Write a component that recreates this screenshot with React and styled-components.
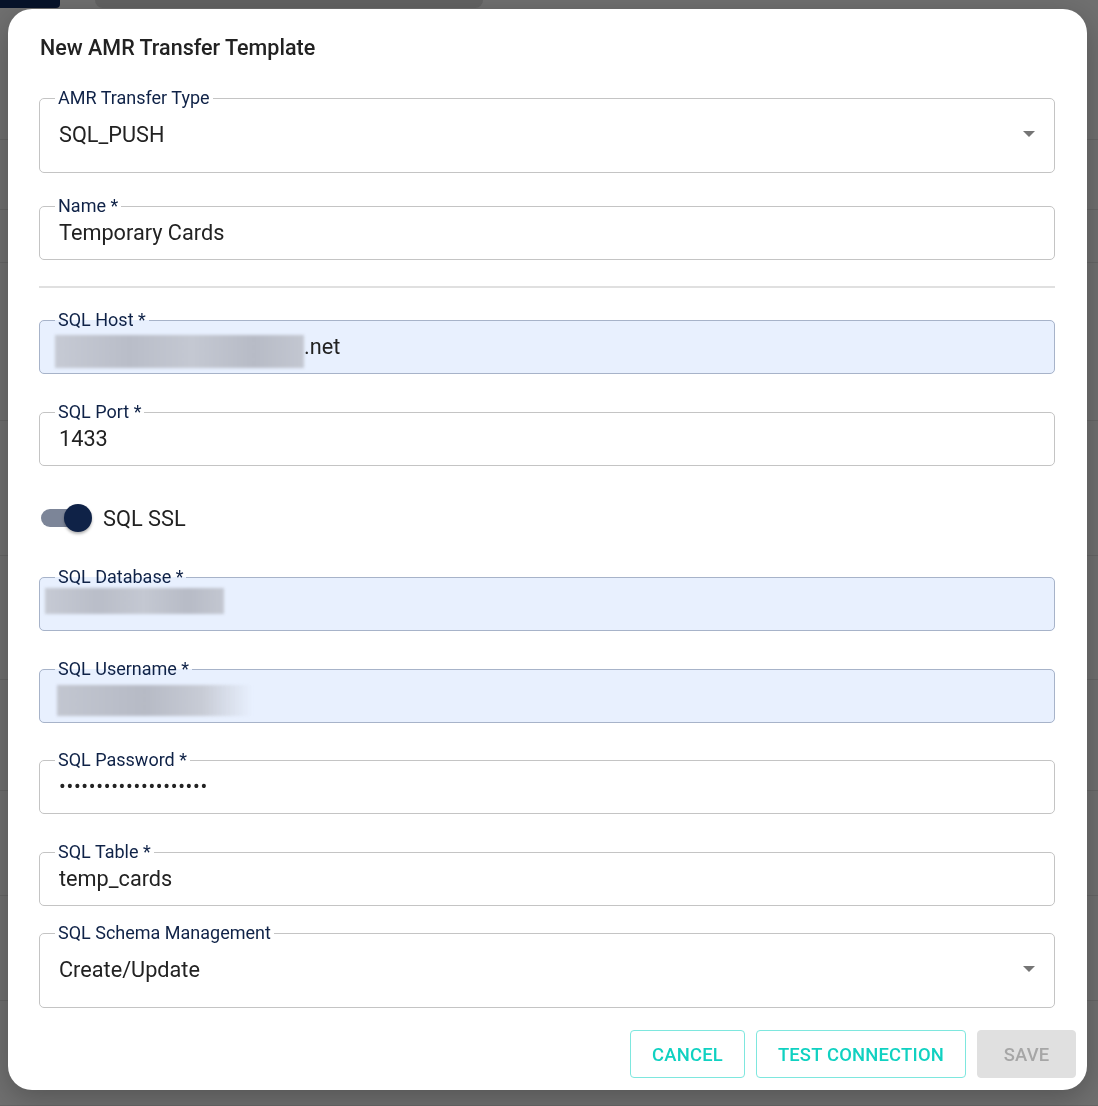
import React from 'react'
import styled, { createGlobalStyle } from 'styled-components'

const GlobalStyle = createGlobalStyle`
  html, body {
    margin: 0;
    padding: 0;
    background: #6f6f6f;
    font-family: Roboto, 'Liberation Sans', sans-serif;
  }
`

// faded page that sits under the backdrop
const Behind = styled.div`
  position: fixed;
  inset: 0;
  background: #707070;
  display: flex;
  flex-direction: column;
`

const BehindTop = styled.div`
  display: flex;
  gap: 35px;
  height: 8px;
`

const NavBlock = styled.div`
  width: 60px;
  background: #07132a;
  border-bottom-right-radius: 4px;
`

const SearchPill = styled.div`
  width: 388px;
  background: #636363;
  border-bottom-left-radius: 8px;
  border-bottom-right-radius: 8px;
`

const BehindRow = styled.div`
  height: ${(p) => p.h}px;
  border-bottom: 1px solid #666;
`

const Page = styled.div`
  position: relative;
  padding: 9px 11px 16px 8px;
`

const Dialog = styled.div`
  background: #fff;
  border-radius: 24px;
  box-shadow: 0 8px 30px rgba(0, 0, 0, 0.25);
  height: 1081px;
  box-sizing: border-box;
  padding: 26px 32px 12px 31px;
  display: flex;
  flex-direction: column;
`

const Title = styled.h2`
  margin: 0 0 0 1px;
  font-size: 21.5px;
  line-height: 26px;
  font-weight: 500;
  color: #222;
`

const Field = styled.fieldset`
  margin: ${(p) => p.mt}px 0 0 0;
  padding: 0 18px 0 15px;
  border: 1px solid ${(p) => (p.filled ? '#a7b3c9' : '#c4c4c4')};
  border-radius: 5px;
  background: ${(p) => (p.filled ? '#e8f0fe' : 'transparent')};
  min-width: 0;
`

const Legend = styled.legend`
  padding: 0 3px;
  font-size: 18px;
  line-height: 20px;
  color: #0f2247;
`

const Value = styled.div`
  display: flex;
  align-items: center;
  height: ${(p) => (p.select ? 52 : 32)}px;
  padding-bottom: ${(p) => (p.select ? 12 : 11)}px;
  padding-left: 4px;
  font-size: 21.7px;
  color: #222;
  white-space: pre;
`

const Dots = styled.span`
  font-size: 20px;
  letter-spacing: 0.7px;
`

const Arrow = styled.span`
  margin-left: auto;
  margin-right: 1px;
  width: 0;
  height: 0;
  border-left: 6px solid transparent;
  border-right: 6px solid transparent;
  border-top: 6px solid #757575;
`

const Blur = styled.span`
  display: inline-block;
  width: ${(p) => p.w}px;
  height: ${(p) => p.h}px;
  margin-left: ${(p) => p.ml || 0}px;
  transform: translateY(${(p) => p.dy || 0}px);
  background: ${(p) =>
    p.fade
      ? 'linear-gradient(90deg, #c2c6d0 0%, #b6bac5 45%, #c8ccd6 75%, rgba(232,240,254,0) 100%)'
      : 'linear-gradient(90deg, #c6cad4 0%, #b9bdc8 30%, #c4c8d2 55%, #b7bbc6 80%, #c3c7d1 100%)'};
  filter: blur(1.5px);
`

const Divider = styled.hr`
  margin: 26px 0 0 0;
  border: none;
  border-top: 2px solid #e0e0e0;
`

const SwitchRow = styled.div`
  display: flex;
  align-items: center;
  gap: 12px;
  margin-top: 38px;
  height: 28px;
`

const Track = styled.div`
  width: 50px;
  height: 18px;
  border-radius: 9px;
  background: #7c8598;
  margin-left: 2px;
  display: flex;
  align-items: center;
  justify-content: flex-end;
`

const Knob = styled.div`
  width: 28px;
  height: 28px;
  border-radius: 50%;
  background: #0f2247;
  margin-right: -1px;
  box-shadow: 0 2px 3px rgba(0, 0, 0, 0.3);
`

const SwitchLabel = styled.span`
  font-size: 21.8px;
  color: #222;
`

const Actions = styled.div`
  display: flex;
  justify-content: flex-end;
  gap: 11px;
  margin-top: auto;
  margin-right: -21px;
`

const Button = styled.button`
  height: 48px;
  padding: 0 21px;
  border-radius: 4px;
  font-family: Roboto, 'Liberation Sans', sans-serif;
  font-size: 18.4px;
  font-weight: 500;
  letter-spacing: 0.2px;
  text-transform: uppercase;
  background: ${(p) => (p.disabled ? '#e0e0e0' : '#fff')};
  color: ${(p) => (p.disabled ? '#a6a6a6' : '#10d1c1')};
  border: 1px solid ${(p) => (p.disabled ? '#e0e0e0' : '#7ee7de')};
  min-width: ${(p) => p.minW || 0}px;
`

const rows = [132, 70, 52, 158, 135, 125, 110, 105, 105, 105]

export default function App() {
  return (
    <>
      <GlobalStyle />
      <Behind>
        <BehindTop>
          <NavBlock />
          <SearchPill />
        </BehindTop>
        {rows.map((h, i) => (
          <BehindRow key={i} h={h} />
        ))}
      </Behind>
      <Page>
        <Dialog>
          <Title>New AMR Transfer Template</Title>

          <Field mt={27}>
            <Legend>AMR Transfer Type</Legend>
            <Value select>
              SQL_PUSH
              <Arrow />
            </Value>
          </Field>

          <Field mt={23}>
            <Legend>Name *</Legend>
            <Value>Temporary Cards</Value>
          </Field>

          <Divider />

          <Field mt={22} filled>
            <Legend>SQL Host *</Legend>
            <Value>
              <Blur w={249} h={33} ml={-4} dy={5} />
              .net
            </Value>
          </Field>

          <Field mt={28}>
            <Legend>SQL Port *</Legend>
            <Value>1433</Value>
          </Field>

          <SwitchRow>
            <Track>
              <Knob />
            </Track>
            <SwitchLabel>SQL SSL</SwitchLabel>
          </SwitchRow>

          <Field mt={35} filled>
            <Legend>SQL Database *</Legend>
            <Value>
              <Blur w={179} h={26} ml={-14} dy={-2} />
            </Value>
          </Field>

          <Field mt={28} filled>
            <Legend>SQL Username *</Legend>
            <Value>
              <Blur w={195} h={31} ml={-2} dy={5} fade />
            </Value>
          </Field>

          <Field mt={27}>
            <Legend>SQL Password *</Legend>
            <Value>
              <Dots>••••••••••••••••••••</Dots>
            </Value>
          </Field>

          <Field mt={28}>
            <Legend>SQL Table *</Legend>
            <Value>temp_cards</Value>
          </Field>

          <Field mt={17}>
            <Legend>SQL Schema Management</Legend>
            <Value select>
              Create/Update
              <Arrow />
            </Value>
          </Field>

          <Actions>
            <Button minW={113}>Cancel</Button>
            <Button>Test Connection</Button>
            <Button disabled minW={99}>
              Save
            </Button>
          </Actions>
        </Dialog>
      </Page>
    </>
  )
}
